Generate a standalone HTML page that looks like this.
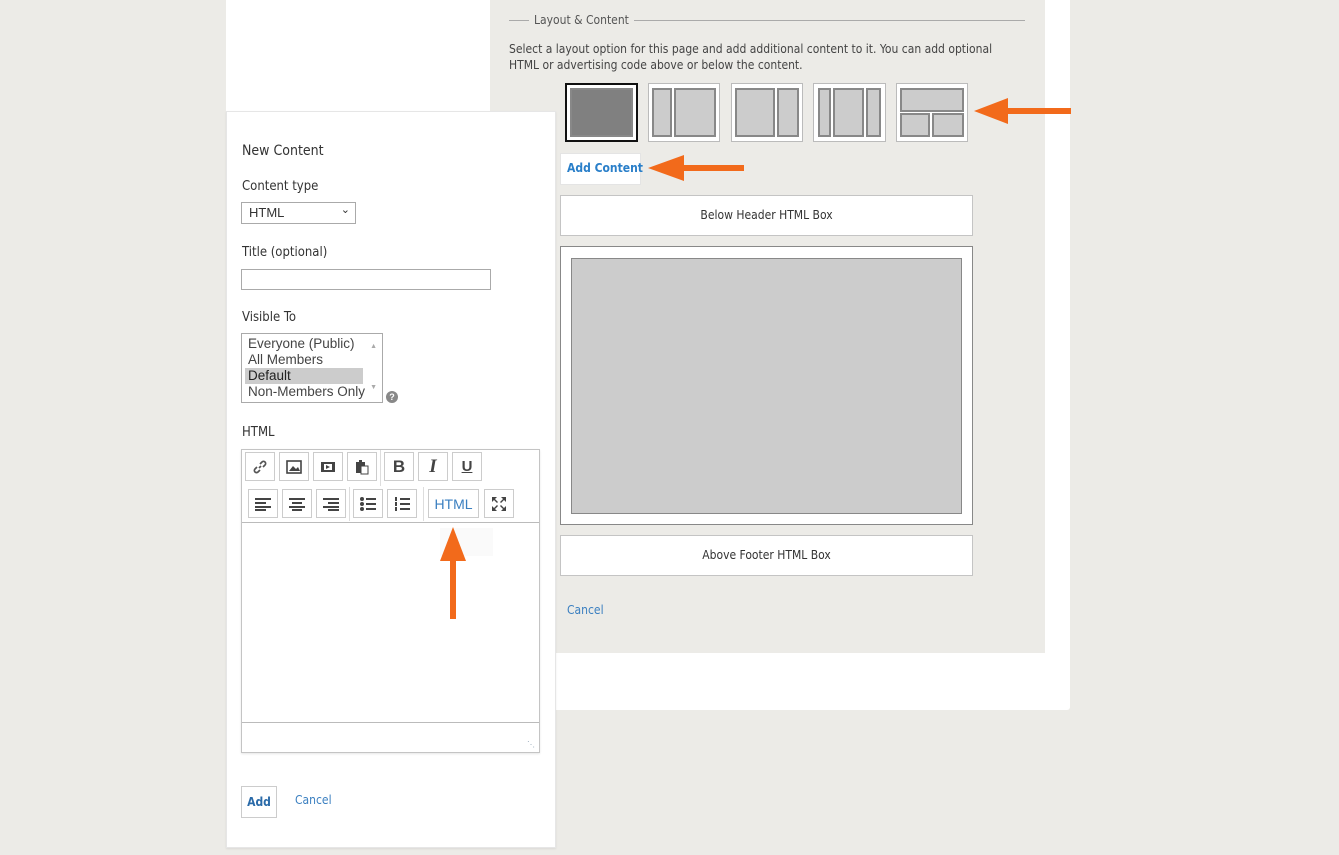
<!DOCTYPE html>
<html><head><meta charset="utf-8"><style>
*{box-sizing:border-box}
body{margin:0;width:1339px;height:855px;background:#ecebe7;position:relative;overflow:hidden;font-family:"Liberation Sans",sans-serif;color:#333}
.a{position:absolute}
.fira{font-family:"DejaVu Sans Condensed","Liberation Sans",sans-serif}
.lay{position:absolute;top:83px;height:59px;background:#fff;border:1px solid #bbb}
.lay i{position:absolute;background:#ccc;border:2px solid #888}
.tb{position:absolute;width:30px;height:29px;border:1px solid #ccc;background:#fff;display:flex;align-items:center;justify-content:center}
.arrow{position:absolute;height:6px;background:#f26a1b}
</style></head><body>
<div class="a" style="left:226px;top:0;width:844px;height:710px;background:#fff;border-radius:0 0 3px 3px"></div>
<div class="a" style="left:490px;top:0;width:555px;height:653px;background:#ecebe7"></div>

<div class="a" style="left:509px;top:20px;width:516px;height:1px;background:#aaa"></div>
<div class="a fira" style="left:529px;top:13px;padding:0 5px;background:#ecebe7;font-size:12px;color:#555">Layout &amp; Content</div>
<div class="a fira" style="left:509px;top:41px;width:495px;font-size:12px;line-height:16px;color:#444">Select a layout option for this page and add additional content to it. You can add optional HTML or advertising code above or below the content.</div>

<div class="lay" style="left:565px;width:73px;border:2px solid #111"><i style="left:3px;top:3px;right:3px;bottom:3px;background:#808080"></i></div>
<div class="lay" style="left:648px;width:72px"><i style="left:3px;top:4px;width:20px;bottom:4px"></i><i style="left:25px;top:4px;right:3px;bottom:4px"></i></div>
<div class="lay" style="left:731px;width:72px"><i style="left:3px;top:4px;width:40px;bottom:4px"></i><i style="left:45px;top:4px;right:3px;bottom:4px"></i></div>
<div class="lay" style="left:813px;width:73px"><i style="left:4px;top:4px;width:13px;bottom:4px"></i><i style="left:19px;top:4px;width:31px;bottom:4px"></i><i style="left:52px;top:4px;right:4px;bottom:4px"></i></div>
<div class="lay" style="left:896px;width:72px"><i style="left:3px;top:4px;right:3px;height:24px"></i><i style="left:3px;top:29px;width:30px;bottom:4px"></i><i style="left:35px;top:29px;right:3px;bottom:4px"></i></div>

<div class="a" style="left:560px;top:153px;width:81px;height:32px;background:#fff;border:1px solid #e4e4e4"></div>
<div class="a fira" style="left:567px;top:161px;font-size:12px;font-weight:bold;color:#2a7fc9">Add Content</div>

<div class="a fira" style="left:560px;top:195px;width:413px;height:41px;background:#fff;border:1px solid #c4c4c4;font-size:12px;line-height:39px;text-align:center;color:#333">Below Header HTML Box</div>
<div class="a" style="left:560px;top:246px;width:413px;height:279px;background:#fff;border:1px solid #888"></div>
<div class="a" style="left:571px;top:258px;width:391px;height:256px;background:#ccc;border:1px solid #888"></div>
<div class="a fira" style="left:560px;top:535px;width:413px;height:41px;background:#fff;border:1px solid #c4c4c4;font-size:12px;line-height:39px;text-align:center;color:#333">Above Footer HTML Box</div>
<div class="a fira" style="left:567px;top:603px;font-size:12px;color:#3a7fc0">Cancel</div>

<div class="arrow" style="left:1000px;top:108px;width:71px"></div>
<div class="a" style="left:974px;top:98px;width:0;height:0;border-top:13px solid transparent;border-bottom:13px solid transparent;border-right:34px solid #f26a1b"></div>
<div class="arrow" style="left:680px;top:165px;width:64px"></div>
<div class="a" style="left:648px;top:155px;width:0;height:0;border-top:13px solid transparent;border-bottom:13px solid transparent;border-right:36px solid #f26a1b"></div>

<div class="a" style="left:226px;top:111px;width:330px;height:737px;background:#fff;border:1px solid #e6e6e6;box-shadow:0 1px 2px rgba(0,0,0,.08)"></div>
<div class="a fira" style="left:242px;top:143px;font-size:14px;color:#333">New Content</div>
<div class="a fira" style="left:242px;top:179px;font-size:13px;color:#333">Content type</div>
<div class="a" style="left:241px;top:202px;width:115px;height:22px;border:1px solid #aaa;font-size:13px;padding:2px 7px;color:#333">HTML<span style="position:absolute;right:5px;top:0;font-size:11px">&#8964;</span></div>
<div class="a fira" style="left:242px;top:245px;font-size:13px;color:#333">Title (optional)</div>
<div class="a" style="left:241px;top:269px;width:250px;height:21px;border:1px solid #aaa"></div>
<div class="a fira" style="left:242px;top:310px;font-size:13px;color:#333">Visible To</div>
<div class="a" style="left:241px;top:333px;width:142px;height:70px;border:1px solid #aaa;font-size:13.5px;line-height:16px;color:#444;padding:2px 0 0 3px">
<div style="padding-left:3px">Everyone (Public)</div><div style="padding-left:3px">All Members</div><div style="padding-left:3px;background:#ccc;width:118px;color:#222">Default</div><div style="padding-left:3px">Non-Members Only</div>
<span style="position:absolute;right:5px;top:5px;font-size:7px;color:#aaa">&#9650;</span><span style="position:absolute;right:5px;bottom:6px;font-size:7px;color:#aaa">&#9660;</span></div>
<div class="a" style="left:386px;top:391px;width:12px;height:12px;border-radius:50%;background:#888;color:#fff;font-size:9px;font-weight:bold;text-align:center;line-height:12px">?</div>
<div class="a fira" style="left:242px;top:425px;font-size:13px;color:#333">HTML</div>

<div class="a" style="left:241px;top:449px;width:299px;height:304px;border:1px solid #c4c4c4;box-shadow:0 1px 2px rgba(0,0,0,.1)"></div>
<div class="a" style="left:242px;top:522px;width:297px;height:1px;background:#bbb"></div>
<div class="a" style="left:242px;top:722px;width:297px;height:1px;background:#bbb"></div>
<div class="a" style="left:380px;top:450px;width:1px;height:36px;background:#ddd"></div>
<div class="a" style="left:349px;top:487px;width:1px;height:34px;background:#ddd"></div>
<div class="a" style="left:423px;top:487px;width:1px;height:34px;background:#ddd"></div>
<div class="a" style="left:527px;top:740px;font-size:8px;color:#9ab">&#8945;</div>

<div class="tb" style="left:245px;top:452px"><svg width="16" height="16" viewBox="0 0 16 16" fill="none" stroke="#555" stroke-width="1.7"><path d="M7 9l2-2M5 8l-2 2a2 2 0 003 3l2-2M11 8l2-2a2 2 0 00-3-3L8 5"/></svg></div>
<div class="tb" style="left:279px;top:452px"><svg width="16" height="14"><rect x="1" y="1" width="14" height="12" fill="none" stroke="#444" stroke-width="1.6"/><path d="M3 11l4-5 3 3 2-2 2 4z" fill="#444"/></svg></div>
<div class="tb" style="left:313px;top:452px"><svg width="16" height="12"><rect x="1" y="1" width="14" height="10" fill="#444"/><rect x="4" y="3" width="8" height="6" fill="#fff"/><path d="M6 4l4 2-4 2z" fill="#444"/></svg></div>
<div class="tb" style="left:347px;top:452px"><svg width="14" height="16"><rect x="1" y="3" width="9" height="11" fill="#444"/><rect x="4" y="1" width="3" height="3" fill="#444"/><rect x="6" y="7" width="7" height="8" fill="#fff" stroke="#444"/></svg></div>
<div class="tb" style="left:384px;top:452px;font-weight:bold;font-size:17px;color:#444">B</div>
<div class="tb" style="left:418px;top:452px;font-style:italic;font-weight:bold;font-family:'Liberation Serif',serif;font-size:19px;color:#444">I</div>
<div class="tb" style="left:452px;top:452px;font-size:15px;font-weight:bold;color:#444;text-decoration:underline">U</div>

<div class="tb" style="left:248px;top:489px"><svg width="16" height="14" fill="#444"><rect y="1" width="16" height="2"/><rect y="5" width="11" height="2"/><rect y="9" width="16" height="2"/><rect y="12" width="11" height="2"/></svg></div>
<div class="tb" style="left:282px;top:489px"><svg width="16" height="14" fill="#444"><rect y="1" width="16" height="2"/><rect x="3" y="5" width="10" height="2"/><rect y="9" width="16" height="2"/><rect x="3" y="12" width="10" height="2"/></svg></div>
<div class="tb" style="left:316px;top:489px"><svg width="16" height="14" fill="#444"><rect y="1" width="16" height="2"/><rect x="5" y="5" width="11" height="2"/><rect y="9" width="16" height="2"/><rect x="5" y="12" width="11" height="2"/></svg></div>
<div class="tb" style="left:353px;top:489px"><svg width="16" height="14" fill="#444"><circle cx="2" cy="2" r="2"/><circle cx="2" cy="7" r="2"/><circle cx="2" cy="12" r="2"/><rect x="6" y="1" width="10" height="2"/><rect x="6" y="6" width="10" height="2"/><rect x="6" y="11" width="10" height="2"/></svg></div>
<div class="tb" style="left:387px;top:489px"><svg width="16" height="16" fill="#444"><rect x="1" y="1" width="2" height="4"/><rect x="1" y="6" width="2" height="4"/><rect x="1" y="11" width="2" height="4"/><rect x="6" y="2" width="10" height="2"/><rect x="6" y="7" width="10" height="2"/><rect x="6" y="12" width="10" height="2"/></svg></div>
<div class="tb" style="left:428px;top:489px;width:51px;font-size:14px;color:#3a7fc0">HTML</div>
<div class="tb" style="left:484px;top:489px"><svg width="16" height="16" fill="#444"><path d="M1 1h5l-2 2 3 3-1 1-3-3-2 2zM15 1v5l-2-2-3 3-1-1 3-3-2-2zM1 15v-5l2 2 3-3 1 1-3 3 2 2zM15 15h-5l2-2-3-3 1-1 3 3 2-2z"/></svg></div>

<div class="a" style="left:440px;top:528px;width:53px;height:28px;background:#fafafa"></div>
<div class="a" style="left:450px;top:555px;width:6px;height:64px;background:#f26a1b"></div>
<div class="a" style="left:440px;top:527px;width:0;height:0;border-left:13px solid transparent;border-right:13px solid transparent;border-bottom:34px solid #f26a1b"></div>

<div class="a fira" style="left:241px;top:786px;width:36px;height:32px;border:1px solid #ccc;font-size:12px;font-weight:bold;color:#2a6aa8;text-align:center;line-height:30px">Add</div>
<div class="a fira" style="left:295px;top:793px;font-size:12px;color:#3a7fc0">Cancel</div>
</body></html>
